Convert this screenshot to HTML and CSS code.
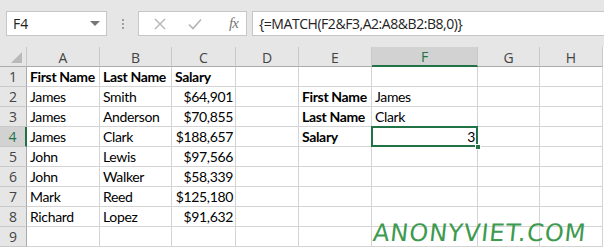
FILE: index.html
```html
<!DOCTYPE html>
<html>
<head>
<meta charset="utf-8">
<link rel="stylesheet" href="styles.css">
</head>
<body>
<div class="app">
  <div class="toolbar">
    <div class="namebox"><span>F4</span><span class="caret"></span></div>
    <div class="dots"><i></i><i></i><i></i></div>
    <div class="fxbox">
      <svg class="ico" width="14" height="14" viewBox="0 0 14 14"><path d="M2 2 L12 12 M12 2 L2 12" stroke="#b4b4b4" stroke-width="1.4" fill="none"/></svg>
      <svg class="ico" width="16" height="14" viewBox="0 0 16 14"><path d="M2 7.5 L6 11.5 L14 2.5" stroke="#b4b4b4" stroke-width="1.6" fill="none"/></svg>
      <span class="fx">fx</span>
    </div>
    <div class="formula">{=MATCH(F2&amp;F3,A2:A8&amp;B2:B8,0)}</div>
  </div>
  <div class="sheet">
    <div class="grid">
      <div class="hd corner"><span class="tri"></span></div>
      <div class="hd col">A</div>
      <div class="hd col">B</div>
      <div class="hd col">C</div>
      <div class="hd col">D</div>
      <div class="hd col">E</div>
      <div class="hd col sel">F</div>
      <div class="hd col">G</div>
      <div class="hd col">H</div>

      <div class="hd row">1</div>
      <div class="c b">First Name</div><div class="c b">Last Name</div><div class="c b">Salary</div><div class="c"></div><div class="c"></div><div class="c"></div><div class="c"></div><div class="c"></div>

      <div class="hd row">2</div>
      <div class="c">James</div><div class="c">Smith</div><div class="c r">$64,901</div><div class="c"></div><div class="c b">First Name</div><div class="c">James</div><div class="c"></div><div class="c"></div>

      <div class="hd row">3</div>
      <div class="c">James</div><div class="c">Anderson</div><div class="c r">$70,855</div><div class="c"></div><div class="c b">Last Name</div><div class="c">Clark</div><div class="c"></div><div class="c"></div>

      <div class="hd row sel">4</div>
      <div class="c">James</div><div class="c">Clark</div><div class="c r">$188,657</div><div class="c"></div><div class="c b">Salary</div><div class="c r active">3<span class="handle"></span></div><div class="c"></div><div class="c"></div>

      <div class="hd row">5</div>
      <div class="c">John</div><div class="c">Lewis</div><div class="c r">$97,566</div><div class="c"></div><div class="c"></div><div class="c"></div><div class="c"></div><div class="c"></div>

      <div class="hd row">6</div>
      <div class="c">John</div><div class="c">Walker</div><div class="c r">$58,339</div><div class="c"></div><div class="c"></div><div class="c"></div><div class="c"></div><div class="c"></div>

      <div class="hd row">7</div>
      <div class="c">Mark</div><div class="c">Reed</div><div class="c r">$125,180</div><div class="c"></div><div class="c"></div><div class="c"></div><div class="c"></div><div class="c"></div>

      <div class="hd row">8</div>
      <div class="c">Richard</div><div class="c">Lopez</div><div class="c r">$91,632</div><div class="c"></div><div class="c"></div><div class="c"></div><div class="c"></div><div class="c"></div>

      <div class="hd row">9</div>
      <div class="c"></div><div class="c"></div><div class="c"></div><div class="c"></div><div class="c"></div><div class="c"></div><div class="c"></div><div class="c"></div>
    </div>
    <div class="watermark">ANONYVIET.COM</div>
  </div>
</div>
</body>
</html>
```
FILE: styles.css
```css
* { box-sizing: border-box; }
html, body { margin: 0; padding: 0; background: #fff; }
.app { width: 604px; height: 247px; overflow: hidden; position: relative; }
.toolbar {
  height: 47px;
  background: #e6e6e6;
  display: flex;
  align-items: flex-start;
  padding: 11px 0 0 6px;
}
.namebox {
  width: 101px; height: 25px;
  background: #fff; border: 1px solid #c6c6c6;
  display: flex; align-items: center; justify-content: space-between;
  padding: 0 6px 0 6px;
  font: 14px "Open Sans", sans-serif; color: #222;
}
.caret { width: 0; height: 0; border-left: 5px solid transparent; border-right: 5px solid transparent; border-top: 5px solid #777; }
.dots { width: 31px; height: 25px; display: flex; flex-direction: column; align-items: center; justify-content: center; gap: 2px; }
.dots i { display: block; width: 2px; height: 2px; background: #a0a0a0; }
.fxbox {
  width: 109px; height: 25px; background: #fff; border: 1px solid #c6c6c6;
  display: flex; align-items: center; padding-left: 14px; gap: 20px;
}
.fx { font: italic 15px "Liberation Serif", serif; color: #777; margin-left: 6px; letter-spacing: -1px; }
.formula {
  margin-left: 5px; flex: 1; height: 25px; background: #fff; border: 1px solid #c6c6c6; border-right: none;
  font: 14px "Open Sans", sans-serif; letter-spacing: -0.45px; color: #222; padding: 2px 0 0 6px; white-space: nowrap;
}
.sheet { position: relative; }
.grid {
  display: grid;
  grid-template-columns: 27px 73px 72px 64px 63px 73px 106px 62px 63px;
  grid-auto-rows: 20px;
}
.hd {
  background: #e6e6e6;
  font: 14px "Open Sans", sans-serif; color: #444;
  display: flex; align-items: center; justify-content: center;
}
.col { border-right: 1px solid #c8c8c8; border-bottom: 1px solid #ababab; padding-top: 1px; }
.row { border-bottom: 1px solid #c8c8c8; border-right: 1px solid #ababab; }
.corner { border-right: 1px solid #c8c8c8; border-bottom: 1px solid #ababab; position: relative; }
.tri { position: absolute; right: 4px; bottom: 3px; width: 0; height: 0; border-left: 11px solid transparent; border-bottom: 11px solid #b9b9b9; }
.col.sel { background: #d2d2d2; border-bottom: 2px solid #217346; color: #217346; }
.row.sel { background: #d2d2d2; border-right: 2px solid #217346; color: #217346; }
.c {
  border-right: 1px solid #d4d4d4; border-bottom: 1px solid #d4d4d4;
  font: 14px "Lato", sans-serif; letter-spacing: -0.35px; color: #000;
  padding: 0 2px 1px 3px;
  display: flex; align-items: flex-end;
  white-space: nowrap;
}
.c.b { font-weight: bold; }
.c.r { justify-content: flex-end; }
.c.active { position: relative; }
.c.active::before {
  content: ""; position: absolute; left: -1px; top: -1px; right: -1px; bottom: -1px;
  border: 2px solid #217346;
}
.handle { position: absolute; right: -4px; bottom: -4px; width: 6px; height: 6px; background: #217346; border: 1px solid #fff; }
.watermark {
  position: absolute; left: 373px; top: 172px;
  font: 24px/28px "DejaVu Sans", sans-serif; color: #3e9a4e; letter-spacing: 1px;
  transform: skewX(-6deg);
}
```
